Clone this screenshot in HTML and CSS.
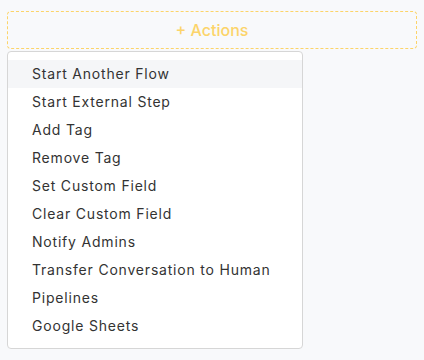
FILE: index.html
```html
<!DOCTYPE html>
<html lang="en">
<head>
<meta charset="UTF-8">
<title>Actions</title>
<link rel="stylesheet" href="styles.css">
</head>
<body>
<div class="page">
  <button class="add-action">+ Actions</button>
  <ul class="menu">
    <li class="active">Start Another Flow</li>
    <li>Start External Step</li>
    <li>Add Tag</li>
    <li>Remove Tag</li>
    <li>Set Custom Field</li>
    <li>Clear Custom Field</li>
    <li>Notify Admins</li>
    <li>Transfer Conversation to Human</li>
    <li>Pipelines</li>
    <li>Google Sheets</li>
  </ul>
</div>
</body>
</html>
```

FILE: styles.css
```css
body {
  margin: 0;
  background-color: #f8f9fb;
  font-family: Inter, sans-serif;
}
.page {
  padding: 11px 7px 0 7px;
}
.add-action {
  display: block;
  width: 410px;
  height: 38px;
  background: transparent;
  border: 1px dashed #fcd46a;
  border-radius: 4px;
  color: #fcd46a;
  font-family: Inter, sans-serif;
  font-size: 16px;
  font-weight: 500;
  cursor: pointer;
}
.menu {
  list-style: none;
  margin: 2px 0 0 0;
  padding: 8px 0;
  width: 294px;
  background-color: #fff;
  border: 1px solid #d6d6d6;
  border-radius: 4px;
}
.menu li {
  height: 28px;
  line-height: 28px;
  padding-left: 24px;
  font-size: 14px;
  letter-spacing: 0.8px;
  color: #333;
}
.menu li.active {
  background-color: #f5f6f8;
}
```
